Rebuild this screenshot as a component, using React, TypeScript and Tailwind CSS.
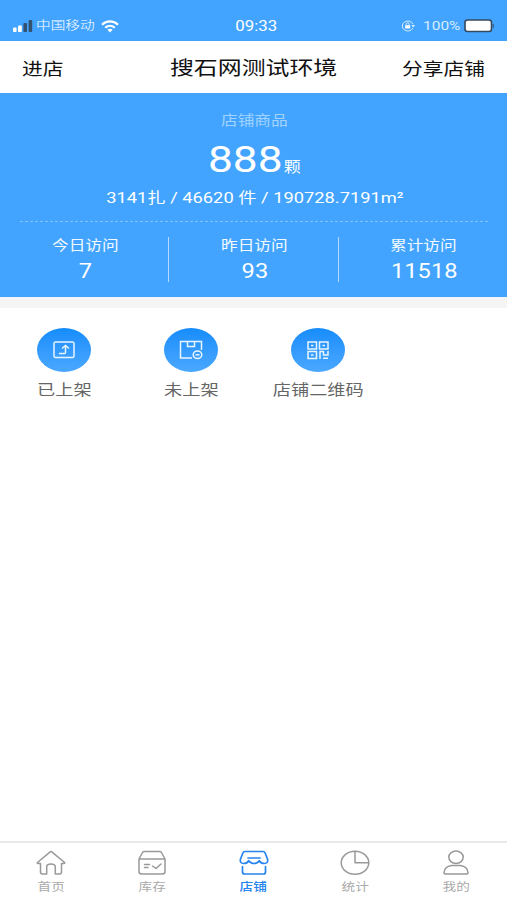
import type { ReactNode } from "react";

function Wide({ className = "", children }: { className?: string; children: ReactNode }) {
  return <span className={`inline-block whitespace-nowrap scale-x-[1.22] ${className}`}>{children}</span>;
}

function StatusBar() {
  return (
    <div className="flex h-[41px] items-end bg-[#42a4ff] pb-[6px] text-white">
      <div className="flex h-[18px] flex-1 items-center pl-[13px]">
        <svg width="20" height="12" viewBox="0 0 20 12">
          <rect x="0" y="7.5" width="3.6" height="4.5" rx="1" fill="#fff" />
          <rect x="5" y="5.5" width="3.8" height="6.5" rx="1" fill="#fff" />
          <rect x="10.4" y="3" width="3.6" height="9" rx="1" fill="#34526f" />
          <rect x="15.6" y="0" width="3.6" height="12" rx="1" fill="#34526f" />
        </svg>
        <Wide className="ml-[3px] origin-left text-[12px] font-light leading-[18px]">中国移动</Wide>
        <svg className="ml-[17px]" width="18" height="13" viewBox="0 0 18 13" fill="none" stroke="#fff" strokeWidth="2.2">
          <path d="M1 4.8C5.5 .3 12.5 .3 17 4.8" />
          <path d="M4.2 7.8c2.8-2.6 6.8-2.6 9.6 0" />
          <path d="M6.4 9.7c1.5-1.3 3.7-1.3 5.2 0L9 12.4z" fill="#fff" stroke="none" />
        </svg>
      </div>
      <Wide className="ml-[4px] text-[13.8px] leading-[18px]">09:33</Wide>
      <div className="flex h-[18px] flex-1 items-center justify-end pr-[12px]">
        <svg width="14" height="12" viewBox="0 0 14 12" fill="none" stroke="#d5ecff">
          <path d="M12 7.8A5.5 5 0 1 1 12 4.2M11 5.5h2.5L12.3 7z" />
          <rect x="4.2" y="5.2" width="5" height="3.3" fill="#fff" stroke="none" />
          <path d="M5.2 5.2V4.3a1.5 1.5 0 0 1 3 0v.9" />
        </svg>
        <Wide className="ml-[8px] w-[36px] origin-left text-[12.7px] leading-[18px] text-[#d5ecff]">100%</Wide>
        <svg className="ml-[5px]" width="31" height="14" viewBox="0 0 31 14">
          <rect x="1" y="1" width="26.5" height="11.5" rx="2.5" fill="#fff" stroke="#34495e" strokeWidth="1.6" />
          <path d="M29.3 5v4" stroke="#34679a" strokeWidth="1.5" />
        </svg>
      </div>
    </div>
  );
}

function Visit({ label, value }: { label: string; value: string }) {
  return (
    <div className="flex flex-1 flex-col items-center pl-[2px]">
      <Wide className="text-[13.7px] leading-[16px] text-[#f2faff]">{label}</Wide>
      <Wide className="mt-[6px] text-[19.4px] leading-[26px]">{value}</Wide>
    </div>
  );
}

function Action({ label, children }: { label: string; children: ReactNode }) {
  return (
    <div className="flex w-[127px] flex-col items-center">
      <div className="flex h-[44px] w-[54px] items-center justify-center rounded-[50%] bg-linear-to-b from-[#138cfb] to-[#4aa8ff]">
        <svg width="24" height="20" viewBox="0 0 24 20" fill="none" stroke="#e8f5ff" strokeWidth="1.5">
          {children}
        </svg>
      </div>
      <Wide className="mt-[8px] ml-px text-[14.9px] leading-[20px] text-[#666]">{label}</Wide>
    </div>
  );
}

function Tab({ label, active = false, children }: { label: string; active?: boolean; children: ReactNode }) {
  return (
    <div className={`flex flex-1 flex-col items-center ${active ? "font-medium text-[#2684ee]" : "text-[#999]"}`}>
      <svg width="30" height="26" viewBox="0 0 30 26" fill="none" stroke="currentColor" strokeWidth="1.5" strokeLinejoin="round" strokeLinecap="round">
        {children}
      </svg>
      <Wide className={`mt-[5px] text-[11.2px] leading-[14px] ${active ? "" : "text-[#aaa]"}`}>{label}</Wide>
    </div>
  );
}

export default function App() {
  return (
    <div className="flex h-[900px] w-[507px] flex-col overflow-hidden bg-white font-[Roboto,'Noto_Sans_CJK_SC',sans-serif]">
      <StatusBar />
      <header className="flex h-[52px] items-center px-[22px] pt-[4px] text-[#111]">
        <div className="flex-1 pt-[2px]">
          <Wide className="origin-left text-[17px]">进店</Wide>
        </div>
        <Wide className="text-[19.6px]">搜石网测试环境</Wide>
        <div className="flex-1 pt-[2px] text-right">
          <Wide className="origin-right text-[17px]">分享店铺</Wide>
        </div>
      </header>
      <section className="flex h-[204px] flex-col items-center bg-[#42a4ff] pt-[18px] text-white">
        <Wide className="ml-[2px] text-[13.7px] leading-[18px] text-[#a0d3ff]">店铺商品</Wide>
        <div className="mt-[8px] ml-[2px] scale-x-[1.18] text-[37.5px] leading-[44px] whitespace-nowrap">
          888<span className="ml-px text-[14.3px]">颗</span>
        </div>
        <Wide className="mt-[-1px] ml-[2px] text-[15px] leading-[20px]">3141扎 / 46620 件 / 190728.7191m²</Wide>
        <div className="mt-[13px] w-[468px] border-t border-dashed border-[#82c2ff]" />
        <div className="mt-[15px] flex w-full">
          <Visit label="今日访问" value="7" />
          <div className="h-[45px] w-px bg-[#b4dbff]" />
          <Visit label="昨日访问" value="93" />
          <div className="h-[45px] w-px bg-[#b4dbff]" />
          <Visit label="累计访问" value="11518" />
        </div>
      </section>
      <div className="h-[11px] bg-[#f5f5f6]" />
      <main className="flex flex-1 pt-[20px]">
        <Action label="已上架">
          <rect x="2" y="2" width="20" height="15.5" rx="1.5" />
          <path d="M7 13.5h5.5q1 0 1-1V6M10 8.5 13.5 5.5 17 8.5" />
        </Action>
        <Action label="未上架">
          <path d="M13 18H1.5V1.5h21V10M8.5 1.5v5h7v-5" />
          <ellipse cx="18.5" cy="14.8" rx="4.3" ry="3.7" />
          <path d="M16.5 14.8h4" />
        </Action>
        <Action label="店铺二维码">
          <path d="M2 2h8.5v7H2zM13.5 2H22v7h-8.5zM2 11.5h8.5v7H2zM5 5.5h2.5M16.5 5.5H19M5 15h2.5M14 19v-7.5h3.5V15H22v-4M17 18.3h5" />
        </Action>
      </main>
      <nav className="flex h-[59px] border-t-2 border-[#e8e8e8] pt-[7px]">
        <Tab label="首页">
          <path d="M14.2 1.8 1.4 12.5q-.5 1 .5 1h2.6V22q0 2 2 2h4.2v-7q0-3 4.3-3t4.3 3v7h4.2q2 0 2-2v-8.5h2.6q1 0 .5-1L15.8 1.8q-.8-.6-1.6 0z" />
        </Tab>
        <Tab label="库存">
          <path d="M2 9 5.5 2.5Q6 1.5 7.5 1.5h15q1.5 0 2 1L28 9v12.5q0 2.5-2.5 2.5h-21Q2 24 2 21.5zM2 9h26M7.5 14.5h5M7.5 17.5h3.5M15.5 16l3.5 2.5 5-4.5" />
        </Tab>
        <Tab label="店铺" active>
          <path d="M6 1.5h18q1.5 0 2 1.3L28.5 9q1 4.5-3.2 4.5-3.3 0-5-2.8-2 2.8-5.3 2.8t-5.3-2.8q-1.7 2.8-5 2.8Q.5 13.5 1.5 9L4 2.8Q4.500 1.500 6 1.500zM9 8h12M3.500 16.500V22q0 2 2 2h19q2 0 2-2v-5.500" strokeWidth="1.7" />
        </Tab>
        <Tab label="统计">
          <ellipse cx="15" cy="12.8" rx="13.8" ry="11.5" />
          <path d="M15 1.5v11.3h13.5" />
        </Tab>
        <Tab label="我的">
          <ellipse cx="15" cy="7.3" rx="7.2" ry="6.2" />
          <path d="M10.500 15.500h9q7 1 7.500 7 0 1.500-2 1.500H5q-2 0-2-1.500.5-6 7.500-7z" />
        </Tab>
      </nav>
    </div>
  );
}
